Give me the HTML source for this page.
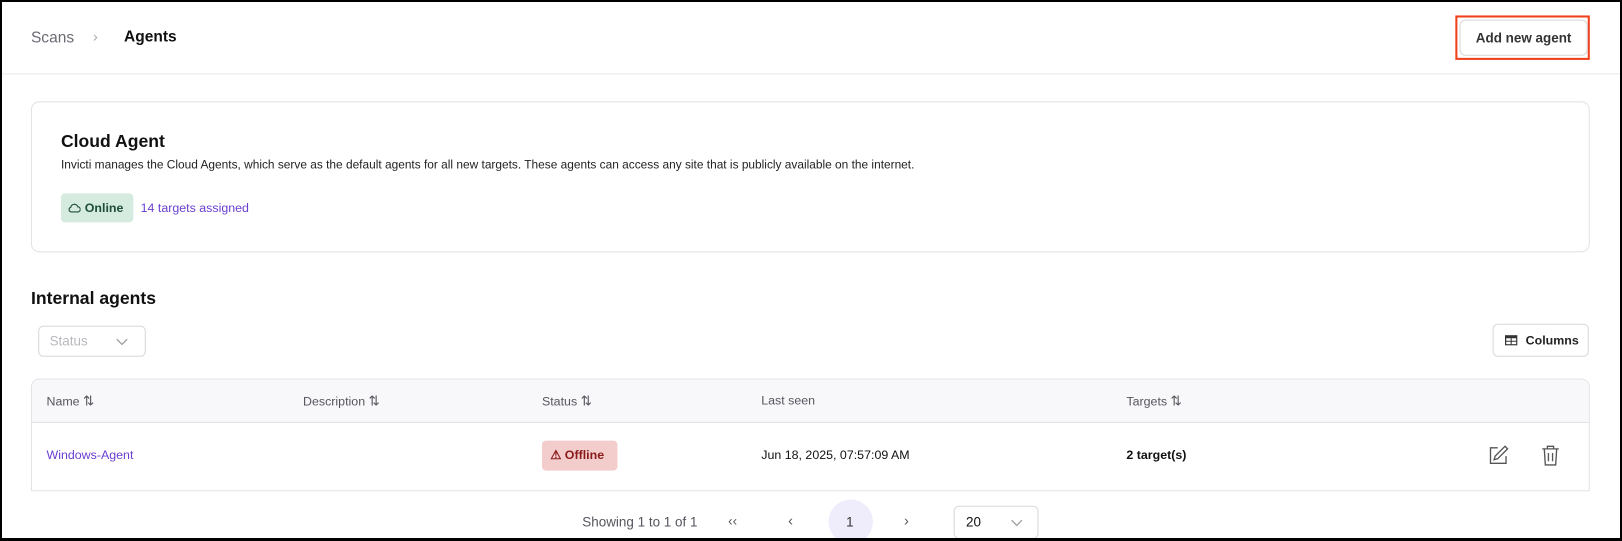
<!DOCTYPE html>
<html><head><meta charset="utf-8"><style>
*{box-sizing:border-box;margin:0;padding:0}
html,body{width:1622px;height:541px;overflow:hidden;background:#000}
body{font-family:"Liberation Sans",sans-serif;color:#1a1a1a;position:relative}
.page{position:absolute;left:2px;top:2px;width:1618px;height:536px;background:#fff;overflow:hidden}
.in{position:absolute;left:0;top:0;width:1566px;height:520px;transform:scale(1.0344);transform-origin:0 0}
.a{position:absolute}
.t{white-space:nowrap}
</style></head><body><div class="page"><div class="in">
<div class="a t" style="left:28px;top:26px;font-size:15px;color:#6b6b75">Scans</div>
<div class="a t" style="left:88px;top:25px;font-size:14px;color:#aaa">&#8250;</div>
<div class="a t" style="left:118px;top:25px;font-size:15px;font-weight:bold;color:#111">Agents</div>
<div class="a" style="left:1405px;top:13px;width:130px;height:43px;border:2px solid #f0401c"></div>
<div class="a t" style="left:1409px;top:17px;width:124px;height:35px;border:1px solid #d6d6da;border-radius:6px;font-size:13px;font-weight:bold;color:#333;text-align:center;line-height:33px">Add new agent</div>
<div class="a" style="left:0;top:69px;width:1618px;height:1px;background:#e8e8ea"></div>

<div class="a" style="left:28px;top:96px;width:1507px;height:146px;border:1px solid #e3e3e6;border-radius:8px"></div>
<div class="a t" style="left:57px;top:125px;font-size:17px;font-weight:bold;color:#111">Cloud Agent</div>
<div class="a t" style="left:57px;top:152px;font-size:11.5px;color:#222">Invicti manages the Cloud Agents, which serve as the default agents for all new targets. These agents can access any site that is publicly available on the internet.</div>
<div class="a t" style="left:57px;top:185px;width:70px;height:28px;background:#d5ebe0;border-radius:4px;font-size:12px;font-weight:bold;color:#1e4d3a;line-height:28px;padding-left:7px">
<svg width="12" height="10" viewBox="0 0 12 10" style="vertical-align:-1px;margin-right:4px"><path d="M3 9h6a2.5 2.5 0 0 0 .3-5A3.5 3.5 0 0 0 2.5 4.5 2.3 2.3 0 0 0 3 9z" fill="none" stroke="#1e4d3a" stroke-width="1.1"/></svg>Online</div>
<div class="a t" style="left:134px;top:192px;font-size:12px;color:#6a3fd0">14 targets assigned</div>

<div class="a t" style="left:28px;top:277px;font-size:17px;font-weight:bold;color:#111">Internal agents</div>
<div class="a t" style="left:35px;top:313px;width:104px;height:30px;border:1px solid #d8d8dc;border-radius:5px;font-size:13px;color:#b8b8bf;line-height:28px;padding-left:10px">Status
<svg class="a" style="left:74px;top:11px" width="12" height="8" viewBox="0 0 12 8"><path d="M1 1l5 5 5-5" fill="none" stroke="#999" stroke-width="1.2"/></svg></div>
<div class="a t" style="left:1441px;top:311px;width:93px;height:32px;border:1px solid #d8d8dc;border-radius:5px;font-size:12px;font-weight:bold;color:#222;line-height:30px;padding-left:31px">Columns
<svg class="a" style="left:11px;top:10px" width="12" height="10" viewBox="0 0 12 10"><rect x=".6" y=".6" width="10.8" height="8.8" fill="none" stroke="#333" stroke-width="1.2"/><rect x=".6" y=".6" width="10.8" height="2.5" fill="#333"/><path d="M.6 6h10.8M6 3v6.4" stroke="#333" stroke-width="1"/></svg></div>

<div class="a" style="left:28px;top:364px;width:1507px;height:109px;border:1px solid #e3e3e6;border-radius:8px 8px 0 0;overflow:hidden">
<div style="height:42px;background:#f8f8fa;border-bottom:1px solid #e3e3e6"></div>
</div>
<div class="a t" style="left:43px;top:378px;font-size:12px;color:#55555e">Name <span style="font-size:13px">&#8645;</span></div>
<div class="a t" style="left:291px;top:378px;font-size:12px;color:#55555e">Description <span style="font-size:13px">&#8645;</span></div>
<div class="a t" style="left:522px;top:378px;font-size:12px;color:#55555e">Status <span style="font-size:13px">&#8645;</span></div>
<div class="a t" style="left:734px;top:378px;font-size:12px;color:#55555e">Last seen</div>
<div class="a t" style="left:1087px;top:378px;font-size:12px;color:#55555e">Targets <span style="font-size:13px">&#8645;</span></div>

<div class="a t" style="left:43px;top:431px;font-size:12px;color:#6a3fd0">Windows-Agent</div>
<div class="a t" style="left:522px;top:424px;width:73px;height:29px;background:#f3cccc;border-radius:4px;font-size:12px;font-weight:bold;color:#8a1a1a;line-height:29px;padding-left:8px">&#9888; Offline</div>
<div class="a t" style="left:734px;top:431px;font-size:12px;color:#111">Jun 18, 2025, 07:57:09 AM</div>
<div class="a t" style="left:1087px;top:431px;font-size:12px;font-weight:bold;color:#111">2 target(s)</div>
<svg class="a" style="left:1437px;top:428px" width="20" height="20" viewBox="0 0 20 20" fill="none" stroke="#555" stroke-width="1.3"><path d="M9 3H2v15h15v-7"/><path d="M16 1.5l2.5 2.5L9 13.5l-3.5 1 1-3.5z"/></svg>
<svg class="a" style="left:1488px;top:428px" width="18" height="21" viewBox="0 0 18 21" fill="none" stroke="#555" stroke-width="1.3"><path d="M1 4h16M6 4V1.5h6V4M3 4l1 15.5h10L15 4M7 8v8M11 8v8"/></svg>

<div class="a t" style="left:561px;top:495px;font-size:13px;color:#55555e">Showing 1 to 1 of 1</div>
<div class="a t" style="left:702px;top:494px;font-size:13px;color:#555">&#8249;&#8249;</div>
<div class="a t" style="left:760px;top:493px;font-size:14px;color:#555">&#8249;</div>
<div class="a" style="left:799px;top:481px;width:43px;height:43px;border-radius:50%;background:#efedfc"></div>
<div class="a t" style="left:816px;top:495px;font-size:13px;color:#333">1</div>
<div class="a t" style="left:872px;top:493px;font-size:14px;color:#555">&#8250;</div>
<div class="a t" style="left:920px;top:487px;width:82px;height:32px;border:1px solid #d8d8dc;border-radius:5px;font-size:13px;color:#111;line-height:30px;padding-left:11px">20
<svg class="a" style="left:54px;top:12px" width="12" height="8" viewBox="0 0 12 8"><path d="M1 1l5 5 5-5" fill="none" stroke="#999" stroke-width="1.2"/></svg></div>
</div></div></body></html>
